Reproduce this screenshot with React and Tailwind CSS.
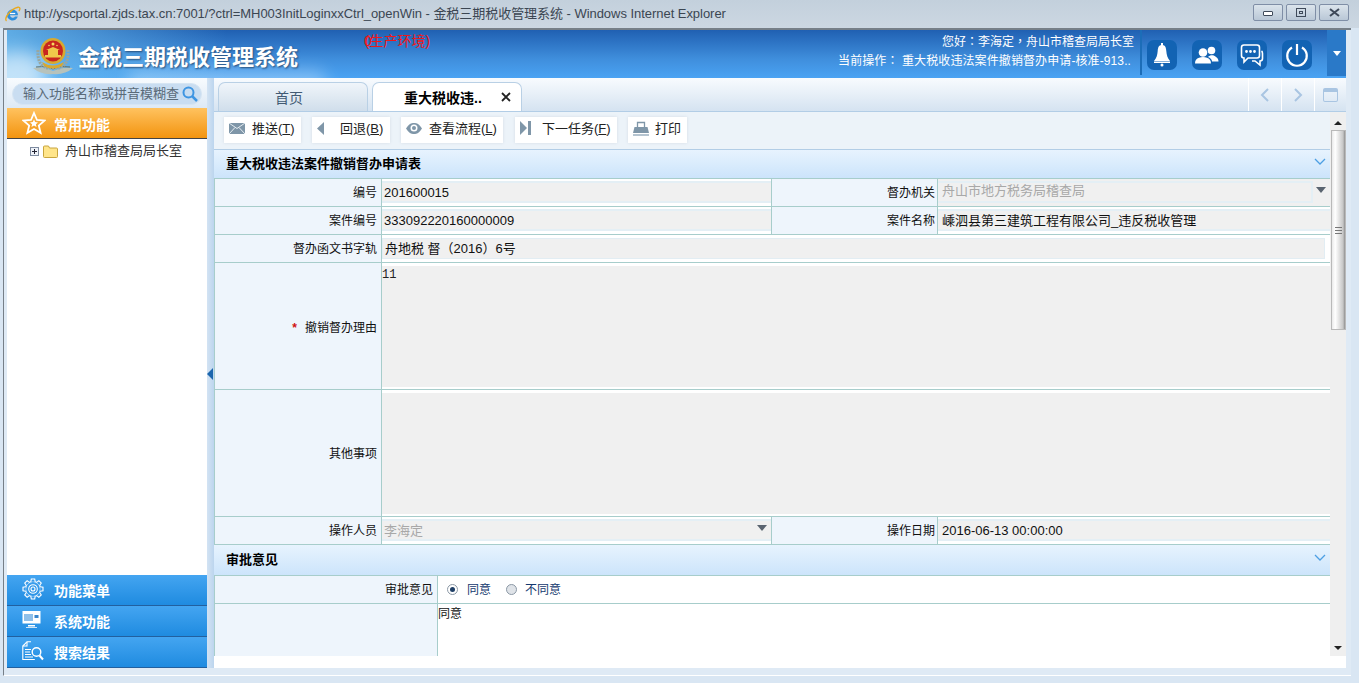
import React from "react";

const cjk = { fontFamily: '"Liberation Sans","Noto Sans CJK SC",sans-serif' };

function Emblem() {
  return (
    <svg width="40" height="38" viewBox="0 0 40 38">
      <path d="M0 30 Q10 28 20 33 Q30 28 40 30 Q32 37 20 36 Q8 37 0 30Z" fill="#b7c2bb" />
      <path d="M3 29 Q12 27 20 31 Q28 27 37 29" fill="none" stroke="#5f6f68" strokeWidth="1" />
      <path d="M5 12 Q4 27 14 30 L26 30 Q36 27 35 12" fill="none" stroke="#9aa69e" strokeWidth="3" strokeDasharray="2 1" />
      <ellipse cx="20" cy="13" rx="12.500" ry="13" fill="#d8a92f" />
      <ellipse cx="20" cy="13" rx="10" ry="10.500" fill="#c8261f" />
      <path d="M12 17h16v2.500H12z M15 12h10v5H15z" fill="#f0c94a" />
      <path d="M13 12l7-3 7 3Z" fill="#f0c94a" />
      <circle cx="20" cy="6" r="1.500" fill="#f6dc5e" />
      <circle cx="16" cy="7.500" r=".8" fill="#f6dc5e" />
      <circle cx="24" cy="7.500" r=".8" fill="#f6dc5e" />
      <path d="M9 24 Q20 31 31 24 L29 28 Q20 33 11 28Z" fill="#d8a92f" />
    </svg>
  );
}

function IeLogo() {
  return (
    <svg width="17" height="17" viewBox="0 0 17 17" className="mr-[2px] shrink-0">
      <path d="M8.500 3.500a5.500 5.500 0 0 1 5.500 5.800H6a2.700 2.700 0 0 0 5 1.200h2.800a5.500 5.500 0 1 1-5.300-7Z" fill="#2f8fdc" />
      <rect x="6" y="6.900" width="5.200" height="1.200" fill="#fff" />
      <path d="M2.500 15C-.5 13 6 3 14 1.200c2.200-.3 2.500 1.500 1 4" fill="none" stroke="#e9a91e" strokeWidth="1.400" />
    </svg>
  );
}

function HeaderBtn({ children }) {
  return (
    <div className="w-[30px] h-[30px] rounded-[7px] bg-[#1263b3] flex items-center justify-center">{children}</div>
  );
}

function Bell() {
  return (
    <svg width="18" height="24" viewBox="0 0 18 24">
      <rect x="8" y="0" width="2" height="3" fill="#fff" />
      <path d="M9 2c3 0 4 2 4.300 6 .3 4 1.200 7 3.700 10H1c2.500-3 3.400-6 3.700-10C5 4 6 2 9 2Z" fill="#fff" />
      <rect x="1" y="18.500" width="16" height="1.500" fill="#fff" />
      <circle cx="9" cy="22" r="1.500" fill="#fff" />
    </svg>
  );
}

function Users() {
  return (
    <svg width="24" height="18" viewBox="0 0 24 18">
      <circle cx="16.500" cy="4.500" r="3.800" fill="#fff" />
      <path d="M13 11c2-2.500 6-2.500 8 0 1.500 1 2.500 2 2.500 4.500H17c0-2-1.500-3.500-4-4.500Z" fill="#fff" />
      <circle cx="8" cy="6.500" r="4.300" fill="#fff" />
      <path d="M0 17.500c0-3.500 1.500-5 4-5.800 2.500-1 5.500-1 8 0 2.500.8 4 2.300 4 5.800Z" fill="#fff" />
    </svg>
  );
}

function Chat() {
  return (
    <svg width="24" height="24" viewBox="0 0 24 24" fill="none" stroke="#fff" strokeWidth="1.600">
      <path d="M4 2h13a2.500 2.500 0 0 1 2.500 2.500v8A2.500 2.500 0 0 1 17 15H8l-4 4v-4a2.500 2.500 0 0 1-2.500-2.500v-8A2.500 2.500 0 0 1 4 2Z" />
      <path d="M21.500 8c.7.5 1 1 1 2.500v5c0 1.500-1 2.500-2.500 2.500v4l-5-4h-3" />
      <circle cx="6.500" cy="8.500" r=".6" fill="#fff" />
      <circle cx="10.500" cy="8.500" r=".6" fill="#fff" />
      <circle cx="14.500" cy="8.500" r=".6" fill="#fff" />
    </svg>
  );
}

function Power() {
  return (
    <svg width="24" height="24" viewBox="0 0 24 24" fill="none" stroke="#fff" strokeWidth="2.200">
      <path d="M7 4.500a9.800 9.800 0 1 0 10 0" />
      <path d="M12 1v11" />
    </svg>
  );
}

function Star() {
  return (
    <svg width="24" height="24" viewBox="0 0 24 24" fill="none" stroke="#fff" strokeWidth="1.800">
      <path d="M12 2l3 7 7.500.6-5.700 4.900 1.800 7.300L12 18l-6.600 3.800 1.800-7.300L1.500 9.600 9 9z" />
      <path d="M12 8.500l1.200 2.600 2.800.3-2.100 1.900.6 2.800-2.500-1.500-2.500 1.500.6-2.800L8 11.400l2.800-.3z" fill="#fff" stroke="none" />
    </svg>
  );
}

function Gear() {
  const teeth = [0, 45, 90, 135, 180, 225, 270, 315];
  return (
    <svg width="22" height="22" viewBox="0 0 22 22" fill="none" stroke="#fff" strokeWidth="1.100">
      <circle cx="11" cy="11" r="7.500" />
      {teeth.map((a) => (
        <path key={a} d="M8.800 3.800 L9.300 1 H12.700 L13.200 3.800" transform={`rotate(${a} 11 11)`} fill="#3a9bea" />
      ))}
      <circle cx="11" cy="11" r="4.300" />
      <circle cx="11" cy="11" r="2" />
    </svg>
  );
}

function Monitor() {
  return (
    <svg width="20" height="18" viewBox="0 0 20 18">
      <rect x="0.500" y="0" width="18" height="12.500" fill="#fff" />
      <rect x="2" y="3" width="9" height="7" fill="#8fc0ea" />
      <rect x="12.500" y="4" width="4" height="3" fill="#3a86cc" />
      <rect x="6" y="14" width="7" height="1.500" fill="#fff" />
      <rect x="4" y="16" width="11" height="1" fill="#cfe5f8" />
    </svg>
  );
}

function SearchDoc() {
  return (
    <svg width="22" height="20" viewBox="0 0 22 20" fill="none" stroke="#fff" strokeWidth="1.100">
      <path d="M9 .8H5L.8 5v13.500h12" />
      <path d="M5 1v4H1" />
      <path d="M3 8.500h6M3 11h5M3 13.500h6M3 16h8" />
      <circle cx="14.500" cy="11" r="4.300" strokeWidth="1.400" />
      <path d="M17.500 14.500l3.500 4" strokeWidth="2" />
    </svg>
  );
}

function SideItem({ icon, label }) {
  return (
    <div className="h-[31px] flex items-center bg-[linear-gradient(#44a5f1,#1f8be0)] border-b border-[#22609f] pl-[15px] shrink-0">
      <span className="w-[32px] flex justify-start -mt-[2px]">{icon}</span>
      <span className="text-white text-[14px] font-bold pt-[3px]">{label}</span>
    </div>
  );
}

function ToolBtn({ icon, label, hot, width, gap }) {
  return (
    <div className={`${width} ${gap} h-[26px] shrink-0 bg-white shadow-[0_0_3px_#d5dde5] flex items-center pl-[5px] pb-[2px] text-[13px] text-[#222] whitespace-nowrap`}>
      <span className="-mt-[1px] flex">{icon}</span>
      <span>
        {label}
        {hot && (
          <>
            (<span className="underline">{hot}</span>)
          </>
        )}
      </span>
    </div>
  );
}

const Ic = {
  mail: (
    <svg width="16" height="11" viewBox="0 0 16 11">
      <rect width="16" height="11" fill="#7f96a8" />
      <path d="M0 0l8 5.500 8-5.500M0 11l6-6.500M16 11l-6-6.500" stroke="#e6edf2" strokeWidth="1" fill="none" />
    </svg>
  ),
  back: (
    <svg width="7" height="13" viewBox="0 0 7 13">
      <path d="M7 0v13L0 6.500Z" fill="#7f96a8" />
    </svg>
  ),
  eye: (
    <svg width="16" height="11" viewBox="0 0 16 11">
      <path d="M0 5.500C3 1 5 0 8 0s5 1 8 5.500c-3 4.500-5 5.500-8 5.500s-5-1-8-5.500Z" fill="#7f96a8" />
      <circle cx="8" cy="5" r="3.500" fill="#fff" />
      <circle cx="8" cy="5" r="2" fill="#7f96a8" />
    </svg>
  ),
  next: (
    <svg width="11" height="14" viewBox="0 0 11 14">
      <path d="M0 0v14l7-7Z" fill="#7f96a8" />
      <rect x="8" width="3" height="14" fill="#7f96a8" />
    </svg>
  ),
  print: (
    <svg width="16" height="15" viewBox="0 0 16 15">
      <path d="M4.500 6V1.500h7V6" fill="none" stroke="#7f96a8" strokeWidth="1.300" />
      <path d="M1.500 6h13l1.500 6H0Z" fill="#7f96a8" />
      <rect x="0" y="13" width="16" height="2" fill="#b5c4d0" />
    </svg>
  ),
};

function Chevron() {
  return (
    <svg width="12" height="7" viewBox="0 0 12 7" fill="none" stroke="#4d9fe3" strokeWidth="1.300">
      <path d="M1 1l5 5 5-5" />
    </svg>
  );
}

function SectionHead({ title, h }) {
  return (
    <div
      className={`${h} shrink-0 flex items-center justify-between pl-[12px] pr-[4px] bg-[linear-gradient(#e7f3fe,#cce4fb)] text-[13px] font-bold text-black`}
    >
      <span>{title}</span>
      <span className="pb-[6px]">
        <Chevron />
      </span>
    </div>
  );
}

function Label({ children, pad = "pr-[4px]" }) {
  return (
    <div className={`bg-[#eef5fc] border-r border-b border-[#a7cdcb] flex items-center justify-end ${pad} pt-[1px] text-[12px] text-[#111]`}>
      {children}
    </div>
  );
}

function Val({ children, box = "" }) {
  return (
    <div className="border-r border-b border-[#a7cdcb] bg-white pt-[2px] pb-[3px]">
      <div className={`h-full bg-[#f0f0f0] border-y-2 border-[#e4eff5] pl-[2px] pt-[2px] flex items-center text-[13px] text-[#111] ${box}`}>
        {children}
      </div>
    </div>
  );
}

function Arrow() {
  return (
    <svg width="10" height="6" viewBox="0 0 10 6">
      <path d="M0 0h10L5 6Z" fill="#5a6470" />
    </svg>
  );
}

export default function App() {
  return (
    <div className="w-[1359px] h-[683px] overflow-hidden flex flex-col bg-[#d9e6f3]" style={cjk}>
      {/* window title bar */}
      <div className="h-[28px] shrink-0 flex items-center bg-[linear-gradient(#c3d0dc,#ccd7e2)] pl-[4px] pr-[10px]">
        <IeLogo />
        <span className="text-[13px] text-[#3b4652] whitespace-nowrap tracking-[-0.04px] ml-[1px]">
          http://yscportal.zjds.tax.cn:7001/?ctrl=MH003InitLoginxxCtrl_openWin - 金税三期税收管理系统 - Windows Internet Explorer
        </span>
        <div className="ml-auto flex gap-[3px] pb-[3px]">
          {["min", "max", "close"].map((k) => (
            <div
              key={k}
              className="w-[30px] h-[17px] rounded-[2px] border border-[#7f8ea6] bg-[linear-gradient(#dbe4ec,#b9c7d6)] flex items-center justify-center"
            >
              {k === "min" && <div className="w-[10px] h-[5px] rounded-[1px] border border-[#3f4a5a] bg-white mt-[2px]" />}
              {k === "max" && (
                <div className="w-[10px] h-[9px] border border-[#3f4a5a] flex items-center justify-center">
                  <div className="w-[4px] h-[3px] border border-[#3f4a5a]" />
                </div>
              )}
              {k === "close" && (
                <svg width="11" height="9" viewBox="0 0 11 9">
                  <path d="M1 1l9 7M10 1L1 8" stroke="#3f4a5a" strokeWidth="2" />
                </svg>
              )}
            </div>
          ))}
        </div>
      </div>

      {/* window client */}
      <div className="ml-[3px] mr-[8px] h-[648px] shrink-0 border-l border-t-2 border-b border-t-[#767f88] border-l-[#767f88] border-b-white pl-[3px] pr-[5px] pb-[7px] flex flex-col bg-[#dfeaf5]">
        {/* app header */}
        <div className="h-[48px] shrink-0 relative flex bg-[linear-gradient(#2060b2,#3f8edc_60%,#4aa3f3)] overflow-hidden">
          <div className="absolute left-0 top-0 w-[220px] h-[48px] bg-[linear-gradient(90deg,rgba(110,190,240,0.8),rgba(110,190,240,0))]" />
          <div className="absolute left-[-20px] top-[22px] w-[60px] h-[50px] rounded-full bg-white/60 blur-[9px]" />
          <div className="absolute left-[120px] top-[40px] w-[200px] h-[24px] rounded-full bg-white/30 blur-[8px]" />
          <div className="relative pl-[26px] pt-[8px] flex items-start shrink-0">
            <Emblem />
            <span className="ml-[5px] mt-[3px] text-[22px] font-bold text-white whitespace-nowrap [text-shadow:1px_1px_2px_#274e7a]">
              金税三期税收管理系统
            </span>
          </div>
          <div className="relative ml-[66px] mt-[3px] text-[14px] leading-[16px] text-[#f01818] whitespace-nowrap h-[18px]">
            0<span className="ml-[-7px]">(生产环境)</span>
          </div>
          <div className="relative ml-auto w-[305px] text-right pr-[6px] pt-[2px] text-white text-[12px] leading-[18px] whitespace-nowrap">
            <div>您好<span className="font-['Noto_Sans_CJK_TC']">：</span>李海定<span className="font-['Noto_Sans_CJK_TC']">，</span>舟山市稽查局局长室</div>
            <div className="pr-[3px] tracking-[0.1px]">当前操作<span className="font-['Noto_Sans_CJK_TC']">：</span> 重大税收违法案件撤销督办申请-核准-913..</div>
          </div>
          <div className="relative h-[45px] border-l-2 border-[#1c6db8] shrink-0 flex items-start pl-[5px] pt-[10px] gap-[15px]">
            <HeaderBtn><Bell /></HeaderBtn>
            <HeaderBtn><Users /></HeaderBtn>
            <HeaderBtn><Chat /></HeaderBtn>
            <HeaderBtn><Power /></HeaderBtn>
            <div className="w-[19px] h-[46px] -mt-[10px] bg-[#2a79c8] flex items-center justify-center">
              <svg width="8" height="5" viewBox="0 0 8 5">
                <path d="M0 0h8L4 5Z" fill="#fff" />
              </svg>
            </div>
          </div>
        </div>

        <div className="flex-1 flex min-h-0">
          {/* sidebar */}
          <div className="w-[200px] shrink-0 flex flex-col bg-white">
            <div className="h-[30px] shrink-0 bg-[linear-gradient(#f8fbfe,#dde9f5)] pt-[5px] px-[5px]">
              <div className="h-[22px] rounded-full bg-[#c9ddf1] border border-[#d6e5f3] flex items-center pl-[10px] pr-[3px]">
                <span className="text-[13px] text-[#5a6a78] whitespace-nowrap overflow-hidden flex-1">输入功能名称或拼音模糊查</span>
                <svg width="16" height="16" viewBox="0 0 16 16" fill="none" stroke="#3e95e2" strokeWidth="2">
                  <circle cx="6.500" cy="6.500" r="5" />
                  <path d="M10 10l5 5" strokeWidth="2.500" />
                </svg>
              </div>
            </div>
            <div className="h-[31px] shrink-0 flex items-center pl-[15px] bg-[linear-gradient(#ffc25f,#f3940f)] border-b border-[#444]">
              <span className="w-[32px]"><Star /></span>
              <span className="text-white text-[14px] font-bold pt-[5px]">常用功能</span>
            </div>
            <div className="flex-1 relative">
              <div className="flex items-center h-[24px] pl-[23px]">
                <div className="w-[9px] h-[9px] border border-[#7e8ba0] bg-[#eef2f8] flex items-center justify-center relative">
                  <div className="w-[5px] h-px bg-[#223]" />
                  <div className="absolute w-px h-[5px] bg-[#223]" />
                </div>
                <svg width="15" height="13" viewBox="0 0 15 13" className="ml-[4px]">
                  <path d="M0.500 3V2q0-1 1-1h4l1 2h7q1 0 1 1v7.500q0 1-1 1h-12q-1 0-1-1Z" fill="#ffe58a" stroke="#c8a53e" />
                </svg>
                <span className="ml-[7px] text-[13px] text-[#333] whitespace-nowrap">舟山市稽查局局长室</span>
              </div>
            </div>
            <SideItem icon={<Gear />} label="功能菜单" />
            <SideItem icon={<Monitor />} label="系统功能" />
            <SideItem icon={<SearchDoc />} label="搜索结果" />
          </div>

          {/* splitter */}
          <div className="w-[7px] shrink-0 bg-[linear-gradient(90deg,#d3e3f3,#bcd5ee)] flex items-center">
            <svg width="6" height="12" viewBox="0 0 6 12" className="mt-[1px]">
              <path d="M6 0v12L0 6Z" fill="#1c66ad" />
            </svg>
          </div>

          {/* main */}
          <div className="flex-1 min-w-0 flex flex-col bg-white">
            {/* tabs */}
            <div className="h-[34px] shrink-0 flex items-end pl-[4px] bg-[linear-gradient(#f8fbfe,#d5e3f1)] border-b border-[#b2cde6]">
              <div className="w-[150px] h-[29px] rounded-t-[7px] border border-b-0 border-[#b9d0e5] bg-[linear-gradient(#f0f5fa,#d0deeb)] text-[14px] text-[#425a73] flex items-center justify-center pt-[3px] pr-[8px]">
                首页
              </div>
              <div className="ml-[4px] w-[150px] h-[29px] rounded-t-[7px] border border-b-0 border-[#b9d0e5] bg-white text-[14px] font-bold text-black flex items-center pl-[31px] pt-[3px] relative">
                重大税收违..
                <span className="absolute right-[10px] top-[9px]">
                  <svg width="10" height="10" viewBox="0 0 10 10">
                    <path d="M1 1l8 8M9 1L1 9" stroke="#222" strokeWidth="1.800" />
                  </svg>
                </span>
              </div>
              <div className="ml-auto flex h-full items-stretch">
                <div className="w-[33px] border-l border-white flex items-center justify-center">
                  <svg width="10" height="16" viewBox="0 0 10 16" fill="none" stroke="#a9c5e2" strokeWidth="2"><path d="M8 2L2 8l6 6" /></svg>
                </div>
                <div className="w-[33px] border-l border-white flex items-center justify-center">
                  <svg width="10" height="16" viewBox="0 0 10 16" fill="none" stroke="#a9c5e2" strokeWidth="2"><path d="M2 2l6 6-6 6" /></svg>
                </div>
                <div className="w-[32px] border-l border-white flex items-center justify-center">
                  <div className="w-[15px] h-[14px] rounded-[2px] border border-[#a9c5e2] border-t-[4px]" />
                </div>
              </div>
            </div>

            <div className="flex-1 min-h-0 flex flex-col">
              <div className="flex-1 min-h-0 flex overflow-hidden">
                {/* form column */}
                <div className="w-[1116px] shrink-0 flex flex-col">
                  {/* toolbar */}
                  <div className="h-[38px] shrink-0 bg-[#ecf3f9] border-b border-[#b2cde6] flex items-center pl-[10px] pb-[2px]">
                    <ToolBtn icon={Ic.mail} label="推送" hot="T" width="w-[77px]" gap="gap-[7px]" />
                    <div className="w-[11px] shrink-0" />
                    <ToolBtn icon={Ic.back} label="回退" hot="B" width="w-[78px]" gap="gap-[16px]" />
                    <div className="w-[11px] shrink-0" />
                    <ToolBtn icon={Ic.eye} label="查看流程" hot="L" width="w-[102px]" gap="gap-[7px]" />
                    <div className="w-[12px] shrink-0" />
                    <ToolBtn icon={Ic.next} label="下一任务" hot="F" width="w-[102px]" gap="gap-[11px]" />
                    <div className="w-[11px] shrink-0" />
                    <ToolBtn icon={Ic.print} label="打印" width="w-[59px]" gap="gap-[6px]" />
                  </div>

                  <SectionHead title="重大税收违法案件撤销督办申请表" h="h-[28px]" />

                  <div className="grid grid-cols-[167px_390px_166px_393px] grid-rows-[28px_28px_28px_127px_127px_28px] border-l border-t border-[#a7cdcb]">
                    <Label>编号</Label>
                    <Val>201600015</Val>
                    <div className="bg-[#eef5fc] border-r border-b border-[#a7cdcb] flex items-center justify-end pr-[2px] text-[12px] text-[#111]">督办机关</div>
                    <div className="border-r border-b border-[#a7cdcb] bg-[#f0f0f0] pt-[2px] pb-[3px] flex items-center">
                      <div className="w-[375px] h-full border-2 border-l-0 border-[#e4eff5] pl-[4px] flex items-center text-[13px] text-[#a8a8a8] pb-[2px]">
                        舟山市地方税务局稽查局
                      </div>
                      <span className="ml-[3px] -mt-[4px]"><Arrow /></span>
                    </div>
                    <Label>案件编号</Label>
                    <Val>333092220160000009</Val>
                    <Label pad="pr-[2px]">案件名称</Label>
                    <Val box="pl-[4px]">嵊泗县第三建筑工程有限公司_违反税收管理</Val>
                    <Label>督办函文书字轨</Label>
                    <div className="col-span-3 border-r border-b border-[#a7cdcb] bg-white pt-[3px] pb-[3px] pr-[5px]">
                      <div className="h-full bg-[#f0f0f0] border border-[#e2edf3] pl-[2px] flex items-center text-[13px] text-[#111]">
                        舟地税 督（2016）6号
                      </div>
                    </div>
                    <div className="bg-[#eef5fc] border-r border-b border-[#a7cdcb] flex items-center justify-end pr-[4px] pt-[3px] text-[12px] text-[#111]">
                      <span className="text-[#d01010] mr-[8px] font-bold">*</span>
                      撤销督办理由
                    </div>
                    <div className="col-span-3 border-r border-b border-[#a7cdcb] bg-white pt-[3px] pb-[2px]">
                      <div className="h-full bg-[#f0f0f0] text-[12px] leading-[16px] text-[#222] pt-[1px]" style={{ fontFamily: '"Liberation Mono",monospace' }}>
                        11
                      </div>
                    </div>
                    <div className="bg-[#eef5fc] border-r border-b border-[#a7cdcb] flex items-center justify-end pr-[4px] pt-[1px] text-[12px] text-[#111]">
                      其他事项
                    </div>
                    <div className="col-span-3 border-r border-b border-[#a7cdcb] bg-white pt-[3px] pb-[2px]">
                      <div className="h-full bg-[#f0f0f0]" />
                    </div>
                    <Label>操作人员</Label>
                    <Val box="justify-between pr-[4px] text-[#a8a8a8]">
                      <span className="text-[#a8a8a8]">李海定</span>
                      <span className="-mt-[6px]"><Arrow /></span>
                    </Val>
                    <Label pad="pr-[2px]">操作日期</Label>
                    <Val box="pl-[4px]">2016-06-13 00:00:00</Val>
                  </div>

                  <SectionHead title="审批意见" h="h-[30px]" />

                  <div className="grid grid-cols-[223px_893px] grid-rows-[28px_52px] border-l border-t border-[#a7cdcb]">
                    <div className="bg-[#eef5fc] border-r border-b border-[#a7cdcb] flex items-center justify-end pr-[4px] text-[12px] text-[#111]">
                      审批意见
                    </div>
                    <div className="border-r border-b border-[#a7cdcb] flex items-center pl-[9px] text-[12px] text-[#14386e]">
                      <span className="w-[11px] h-[11px] rounded-full border border-[#8b98a5] bg-white flex items-center justify-center">
                        <span className="w-[5px] h-[5px] rounded-full bg-[#1f3f66]" />
                      </span>
                      <span className="ml-[9px]">同意</span>
                      <span className="ml-[15px] w-[11px] h-[11px] rounded-full border border-[#8b98a5] bg-[#dfe3e8]" />
                      <span className="ml-[8px]">不同意</span>
                    </div>
                    <div className="bg-[#eef5fc] border-r border-[#a7cdcb]" />
                    <div className="border-r border-[#a7cdcb] text-[12px] leading-[16px] text-[#111] pt-[2px]">同意</div>
                  </div>
                  <div className="flex-1 bg-white" />
                </div>

                {/* scrollbar */}
                <div className="w-[16px] shrink-0 flex flex-col">
                  <div className="h-[544px] w-[16px] bg-[#efefef] flex flex-col items-center relative">
                    <svg width="8" height="4" viewBox="0 0 8 4" className="mt-[9px] shrink-0">
                      <path d="M4 0l4 4H0Z" fill="#222" />
                    </svg>
                    <div className="mt-[5px] w-[15px] h-[200px] shrink-0 bg-[linear-gradient(90deg,#e9e9e9,#ffffff_25%,#c6c6c6_85%,#8f8f8f)] border border-[#b9b9b9] flex items-center justify-center">
                      <div className="w-[7px] h-[7px] border-y border-[#777] flex items-center">
                        <div className="w-full h-px bg-[#777]" />
                      </div>
                    </div>
                    <div className="flex-1" />
                    <svg width="8" height="4" viewBox="0 0 8 4" className="mb-[6px] shrink-0">
                      <path d="M0 0h8L4 4Z" fill="#222" />
                    </svg>
                  </div>
                </div>
              </div>
            </div>
          </div>
        </div>
      </div>
      <div className="flex-1 bg-[#d9e6f3]" />
    </div>
  );
}
